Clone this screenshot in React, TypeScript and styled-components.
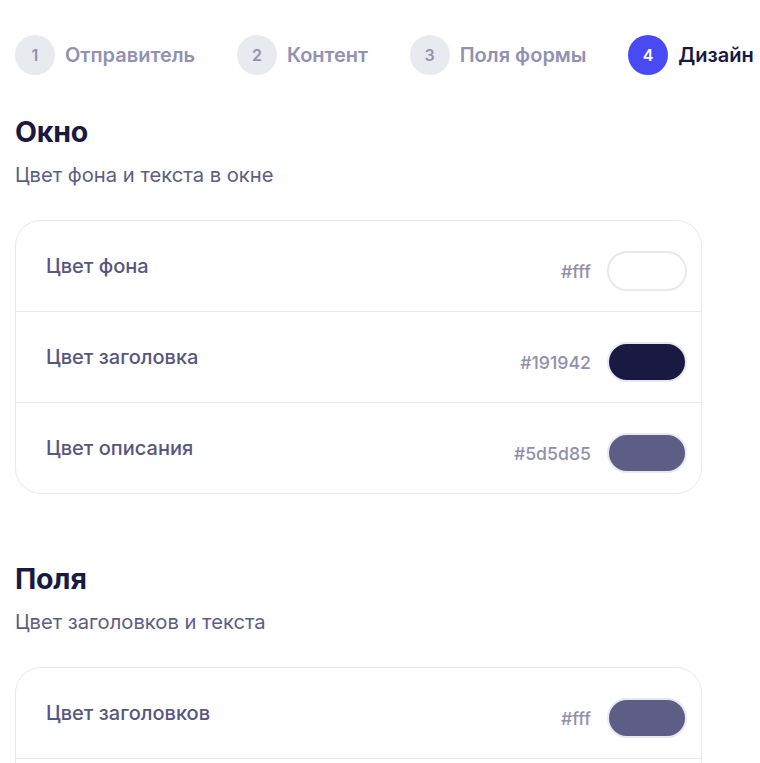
import styled, { createGlobalStyle } from 'styled-components'

const GlobalStyle = createGlobalStyle`
	html, body {
		margin: 0;
		padding: 0;
		background: #fff;
		font-family: Inter, 'Noto Sans', sans-serif;
		-webkit-font-smoothing: antialiased;
	}
	* {
		box-sizing: border-box;
	}
`

const Page = styled.div`
	width: 760px;
	padding: 35px 0 0 15px;
	overflow: hidden;
`

const Stepper = styled.div`
	display: flex;
	align-items: center;
	gap: 41.7px;
	white-space: nowrap;
	margin-bottom: 41px;
`

const Step = styled.div`
	display: flex;
	align-items: center;
	gap: 10px;
`

const StepNumber = styled.div<{ $active?: boolean }>`
	width: 40px;
	height: 40px;
	border-radius: 50%;
	display: flex;
	justify-content: center;
	align-items: center;
	font-size: 16px;
	font-weight: 600;
	background-color: ${({ $active }) => ($active ? '#4a4af4' : '#e9e9f0')};
	color: ${({ $active }) => ($active ? '#fff' : '#9292b0')};
`

const StepLabel = styled.span<{ $active?: boolean }>`
	font-size: 20px;
	font-weight: 600;
	color: ${({ $active }) => ($active ? '#191942' : '#9292b0')};
`

const Section = styled.section`
	width: 687px;
	margin-bottom: 69px;
`

const Title = styled.h2`
	margin: 0;
	font-size: 28.5px;
	line-height: 32px;
	font-weight: 700;
	color: #191942;
	letter-spacing: -0.2px;
`

const Subtitle = styled.p`
	margin: 15px 0 0;
	font-size: 20.2px;
	line-height: 24px;
	color: #5d5d85;
`

const Card = styled.div`
	margin-top: 33px;
	border: 1px solid #e8e8f0;
	border-radius: 26px;
	overflow: hidden;
`

const Row = styled.div`
	display: flex;
	justify-content: space-between;
	align-items: flex-start;
	padding: 30px 14px 20px 30px;
	& + & {
		border-top: 1px solid #e8e8f0;
	}
`

const RowLabel = styled.span`
	font-size: 20px;
	line-height: 30px;
	font-weight: 500;
	color: #56567f;
`

const ColorValue = styled.div`
	display: flex;
	align-items: center;
	gap: 16px;
`

const HexText = styled.span`
	font-size: 17.7px;
	font-weight: 500;
	color: #9090ad;
`

const Swatch = styled.div<{ $color: string }>`
	width: 80px;
	height: 40px;
	border-radius: 20px;
	border: 2px solid #e8e8f0;
	background-color: ${({ $color }) => $color};
`

const steps = ['Отправитель', 'Контент', 'Поля формы', 'Дизайн']

type ColorRow = { label: string; hex: string; color: string }

const sections: { title: string; subtitle: string; rows: ColorRow[] }[] = [
	{
		title: 'Окно',
		subtitle: 'Цвет фона и текста в окне',
		rows: [
			{ label: 'Цвет фона', hex: '#fff', color: '#fff' },
			{ label: 'Цвет заголовка', hex: '#191942', color: '#191942' },
			{ label: 'Цвет описания', hex: '#5d5d85', color: '#5d5d85' },
		],
	},
	{
		title: 'Поля',
		subtitle: 'Цвет заголовков и текста',
		rows: [
			{ label: 'Цвет заголовков', hex: '#fff', color: '#5d5d85' },
			{ label: 'Цвет текста', hex: '#191942', color: '#191942' },
		],
	},
]

export default function App() {
	return (
		<>
			<GlobalStyle />
			<Page>
				<Stepper>
					{steps.map((step, i) => {
						const active = i === steps.length - 1
						return (
							<Step key={step}>
								<StepNumber $active={active}>{i + 1}</StepNumber>
								<StepLabel $active={active}>{step}</StepLabel>
							</Step>
						)
					})}
				</Stepper>
				{sections.map(section => (
					<Section key={section.title}>
						<Title>{section.title}</Title>
						<Subtitle>{section.subtitle}</Subtitle>
						<Card>
							{section.rows.map(row => (
								<Row key={row.label}>
									<RowLabel>{row.label}</RowLabel>
									<ColorValue>
										<HexText>{row.hex}</HexText>
										<Swatch $color={row.color} />
									</ColorValue>
								</Row>
							))}
						</Card>
					</Section>
				))}
			</Page>
		</>
	)
}
